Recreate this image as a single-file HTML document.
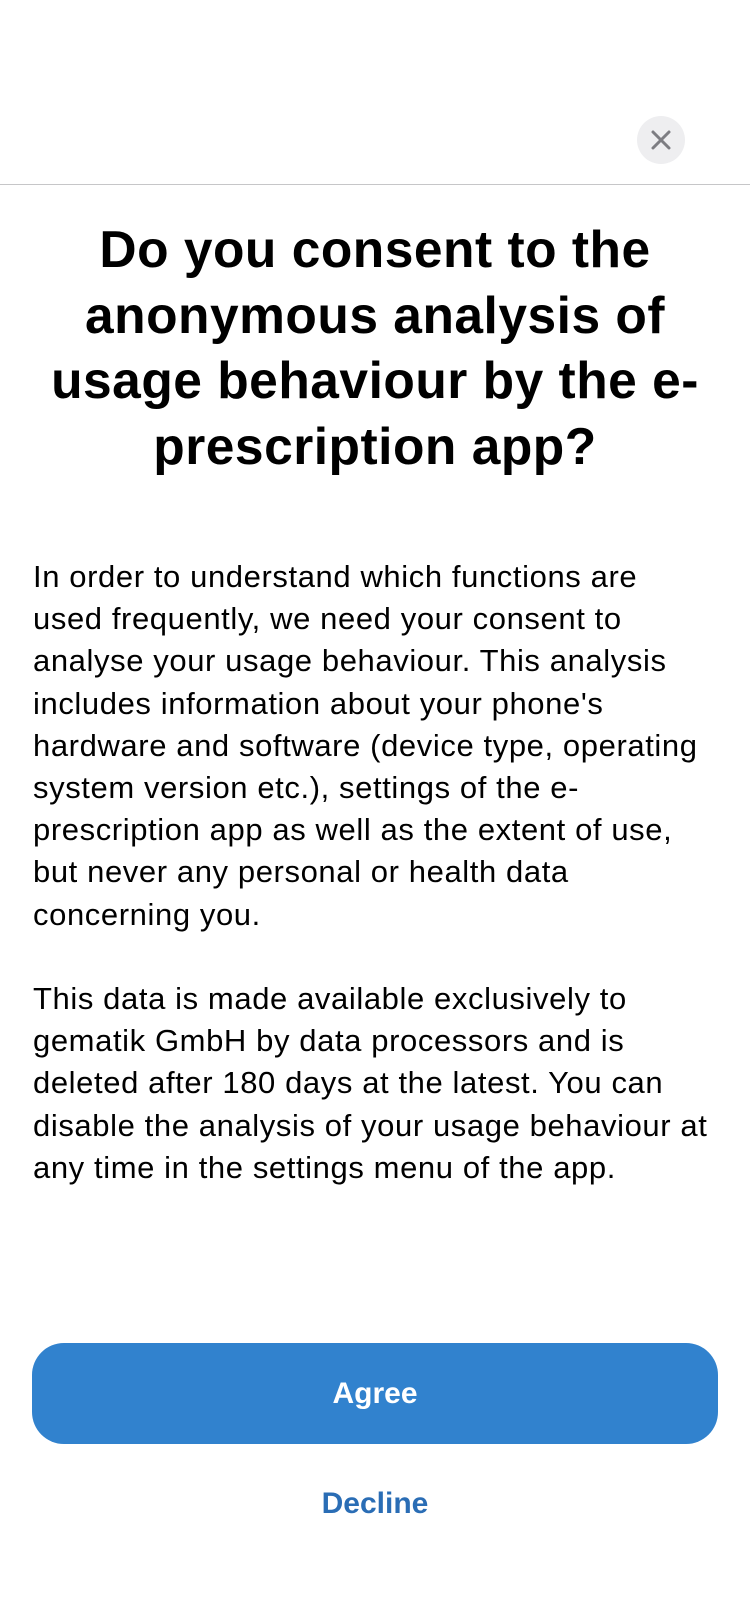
<!DOCTYPE html>
<html><head><meta charset="utf-8"><style>
html,body{margin:0;padding:0;background:#fff;}
body{width:750px;height:1624px;position:relative;overflow:hidden;font-family:"Liberation Sans",sans-serif;}
.close{position:absolute;left:637px;top:116px;width:48px;height:48px;border-radius:50%;background:#eeeef0;}
.div{position:absolute;left:0;top:184px;width:750px;height:1px;background:#c6c6c8;}
h1{position:absolute;left:0;width:750px;top:217px;margin:0;text-align:center;font-size:51.5px;line-height:65.5px;font-weight:bold;color:#000;white-space:nowrap;letter-spacing:0.5px;}
.body{position:absolute;left:33px;width:710px;top:556px;font-size:31px;line-height:42.2px;color:#000;white-space:nowrap;letter-spacing:0.6px;}
.body p{margin:0 0 42.2px 0;}
.btn{position:absolute;left:32px;top:1343px;width:686px;height:101px;border-radius:32px;background:#3182ce;color:#fff;font-size:30px;font-weight:bold;text-align:center;line-height:101px;}
.dec{position:absolute;left:0;width:750px;top:1484px;text-align:center;font-size:30px;font-weight:bold;color:#2a6db5;line-height:40px;}
</style></head><body>
<div class="close"><svg width="48" height="48" viewBox="0 0 48 48"><path d="M16 16L32 32M32 16L16 32" stroke="#7d7d82" stroke-width="3" stroke-linecap="round"/></svg></div>
<div class="div"></div>
<h1>Do you consent to the<br>anonymous analysis of<br>usage behaviour by the e-<br>prescription app?</h1>
<div class="body">
<p>In order to understand which functions are<br>used frequently, we need your consent to<br>analyse your usage behaviour. This analysis<br>includes information about your phone's<br>hardware and software (device type, operating<br>system version etc.), settings of the e-<br>prescription app as well as the extent of use,<br>but never any personal or health data<br>concerning you.</p>
<p>This data is made available exclusively to<br>gematik GmbH by data processors and is<br>deleted after 180 days at the latest. You can<br>disable the analysis of your usage behaviour at<br>any time in the settings menu of the app.</p>
</div>
<div class="btn">Agree</div>
<div class="dec">Decline</div>
</body></html>
